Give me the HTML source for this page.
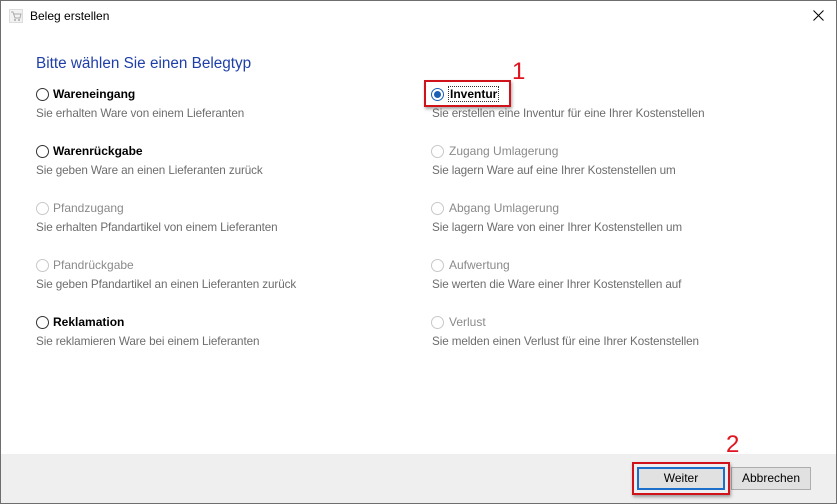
<!DOCTYPE html>
<html><head><meta charset="utf-8"><style>
*{margin:0;padding:0;box-sizing:border-box}
body{width:837px;height:504px;overflow:hidden;background:#fff;font-family:"Liberation Sans",sans-serif;font-size:12px;color:#000;position:relative}
.frame{position:absolute;left:0;top:0;width:837px;height:504px;border:1px solid #6e6e6e}
.a{position:absolute;white-space:nowrap}
.lbl{font-size:12px;line-height:14px}
.b{font-weight:bold}
.dis{color:#8a8a8a}
.desc{color:#6d6d6d;font-size:11.7px;line-height:14px;letter-spacing:-0.1px}
.r{position:absolute;width:13px;height:13px;border-radius:50%;border:1px solid #333;background:#fff}
.r.d{border-color:#c8c8c8}
.r.s{border-color:#1a5fb4}
.r.s::after{content:"";position:absolute;left:2px;top:2px;width:7px;height:7px;border-radius:50%;background:#1a5fb4}
.foot{position:absolute;left:1px;top:454px;width:835px;height:49px;background:#efefef}
.btn{position:absolute;border:1px solid #adadad;background:#e1e1e1;text-align:center;font-size:12px;line-height:20px}
.red{position:absolute;border:2px solid #d0121b;box-shadow:1px 2px 3px rgba(0,0,0,.35)}
.num{position:absolute;color:#e0141e;font-size:24px;line-height:24px}
</style></head><body>
<div class="frame"></div>
<svg class="a" style="left:9px;top:9px" width="14" height="14" viewBox="0 0 14 14"><rect x="0.5" y="0.5" width="13" height="13" fill="#f2f2f2" stroke="#ddd"/><path d="M2 3h2l2 6h5l1-4H5" fill="none" stroke="#aaa"/><circle cx="6" cy="11" r="1" fill="#aaa"/><circle cx="10" cy="11" r="1" fill="#aaa"/></svg>
<div class="a" style="left:30px;top:9px;font-size:12px">Beleg erstellen</div>
<svg class="a" style="left:813px;top:10px" width="11" height="11" viewBox="0 0 11 11"><path d="M0.5 0.5L10.5 10.5M10.5 0.5L0.5 10.5" stroke="#000" stroke-width="1"/></svg>

<div class="a" style="left:36px;top:55px;font-size:15.3px;color:#1f3fa8">Bitte wählen Sie einen Belegtyp</div>

<div class="r" style="left:36px;top:88px"></div><div class="a lbl b" style="left:53px;top:87px">Wareneingang</div>
<div class="a desc" style="left:36px;top:107px">Sie erhalten Ware von einem Lieferanten</div>
<div class="r" style="left:36px;top:145px"></div><div class="a lbl b" style="left:53px;top:144px">Warenrückgabe</div>
<div class="a desc" style="left:36px;top:164px">Sie geben Ware an einen Lieferanten zurück</div>
<div class="r d" style="left:36px;top:202px"></div><div class="a lbl dis" style="left:53px;top:201px">Pfandzugang</div>
<div class="a desc" style="left:36px;top:221px">Sie erhalten Pfandartikel von einem Lieferanten</div>
<div class="r d" style="left:36px;top:259px"></div><div class="a lbl dis" style="left:53px;top:258px">Pfandrückgabe</div>
<div class="a desc" style="left:36px;top:278px">Sie geben Pfandartikel an einen Lieferanten zurück</div>
<div class="r" style="left:36px;top:316px"></div><div class="a lbl b" style="left:53px;top:315px">Reklamation</div>
<div class="a desc" style="left:36px;top:335px">Sie reklamieren Ware bei einem Lieferanten</div>

<div class="r s" style="left:431px;top:88px"></div><div class="a lbl b" style="left:448px;top:86px;border:1px dotted #333;padding:0 1px">Inventur</div>
<div class="a desc" style="left:432px;top:107px">Sie erstellen eine Inventur für eine Ihrer Kostenstellen</div>
<div class="r d" style="left:431px;top:145px"></div><div class="a lbl dis" style="left:449px;top:144px">Zugang Umlagerung</div>
<div class="a desc" style="left:432px;top:164px">Sie lagern Ware auf eine Ihrer Kostenstellen um</div>
<div class="r d" style="left:431px;top:202px"></div><div class="a lbl dis" style="left:449px;top:201px">Abgang Umlagerung</div>
<div class="a desc" style="left:432px;top:221px">Sie lagern Ware von einer Ihrer Kostenstellen um</div>
<div class="r d" style="left:431px;top:259px"></div><div class="a lbl dis" style="left:449px;top:258px">Aufwertung</div>
<div class="a desc" style="left:432px;top:278px">Sie werten die Ware einer Ihrer Kostenstellen auf</div>
<div class="r d" style="left:431px;top:316px"></div><div class="a lbl dis" style="left:449px;top:315px">Verlust</div>
<div class="a desc" style="left:432px;top:335px">Sie melden einen Verlust für eine Ihrer Kostenstellen</div>

<div class="red" style="left:424px;top:80px;width:87px;height:27px"></div>
<div class="num" style="left:512px;top:60px">1</div>

<div class="foot"></div>
<div class="btn" style="left:637px;top:467px;width:88px;height:23px;border:2px solid #1b6fc8;line-height:19px">Weiter</div>
<div class="btn" style="left:731px;top:467px;width:80px;height:23px">Abbrechen</div>
<div class="red" style="left:632px;top:462px;width:98px;height:33px"></div>
<div class="num" style="left:726px;top:433px">2</div>
</body></html>
